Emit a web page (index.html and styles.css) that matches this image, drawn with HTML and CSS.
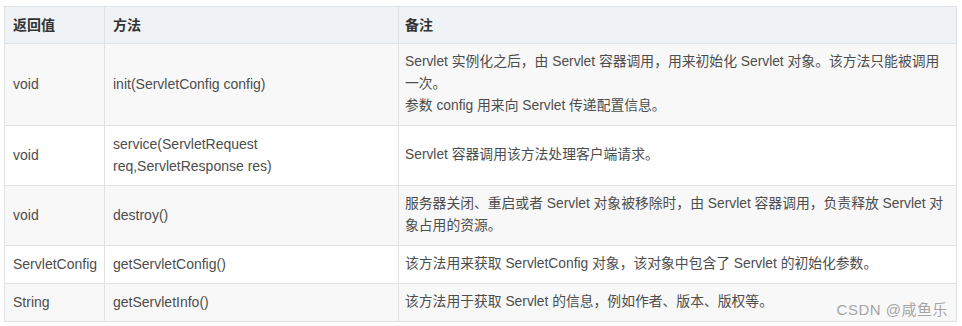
FILE: index.html
```html
<!DOCTYPE html>
<html lang="zh-CN">
<head>
<meta charset="utf-8">
<title>Servlet 方法</title>
<link rel="stylesheet" href="styles.css">
</head>
<body>
<div class="wrap">
  <table class="api">
    <colgroup>
      <col class="c1">
      <col class="c2">
      <col class="c3">
    </colgroup>
    <thead>
      <tr><th>返回值</th><th>方法</th><th class="note">备注</th></tr>
    </thead>
    <tbody>
      <tr>
        <td>void</td>
        <td>init(ServletConfig config)</td>
        <td class="note">Servlet 实例化之后，由 Servlet 容器调用，用来初始化 Servlet 对象。该方法只能被调用一次。<br>参数 config 用来向 Servlet 传递配置信息。</td>
      </tr>
      <tr>
        <td>void</td>
        <td>service(ServletRequest req,ServletResponse res)</td>
        <td class="note">Servlet 容器调用该方法处理客户端请求。</td>
      </tr>
      <tr>
        <td>void</td>
        <td>destroy()</td>
        <td class="note">服务器关闭、重启或者 Servlet 对象被移除时，由 Servlet 容器调用，负责释放 Servlet 对象占用的资源。</td>
      </tr>
      <tr>
        <td>ServletConfig</td>
        <td>getServletConfig()</td>
        <td class="note">该方法用来获取 ServletConfig 对象，该对象中包含了 Servlet 的初始化参数。</td>
      </tr>
      <tr>
        <td>String</td>
        <td>getServletInfo()</td>
        <td class="note">该方法用于获取 Servlet 的信息，例如作者、版本、版权等。</td>
      </tr>
    </tbody>
  </table>
  <div class="watermark">CSDN @咸鱼乐</div>
</div>
</body>
</html>
```
FILE: styles.css
```css
html, body {
  margin: 0;
  padding: 0;
  background: #fff;
}
body {
  padding: 6px 4px 0 4px;
  font-family: "Liberation Sans", "Noto Sans CJK SC", sans-serif;
  font-size: 14px;
  color: #4d4d4d;
}
.wrap {
  position: relative;
  width: 952px;
}
.api {
  border-collapse: collapse;
  table-layout: fixed;
  width: 952px;
  border: 1px solid #dfe2e5;
}
.c1 { width: 100px; }
.c2 { width: 294px; }
.c3 { width: 558px; }
.api th,
.api td {
  border: 1px solid #dfe2e5;
  padding: 7px 8px 8px 8px;
  line-height: 22px;
  text-align: left;
  vertical-align: middle;
}
.api th {
  padding: 7px 8px 7px 8px;
  background: #eff3f5;
  font-weight: bold;
  color: #333;
}
.api .note {
  padding-left: 6px;
  padding-right: 6px;
}
.api td.note {
  font-size: 13.8px;
}
.api tbody tr:nth-child(odd) td {
  background: #f8f8f8;
}
.api tbody tr:nth-child(even) td {
  background: #fff;
}
.watermark {
  position: absolute;
  right: 8px;
  bottom: 2px;
  font-size: 15px;
  line-height: 20px;
  color: rgba(130, 130, 130, 0.72);
  letter-spacing: 0.5px;
}
```
